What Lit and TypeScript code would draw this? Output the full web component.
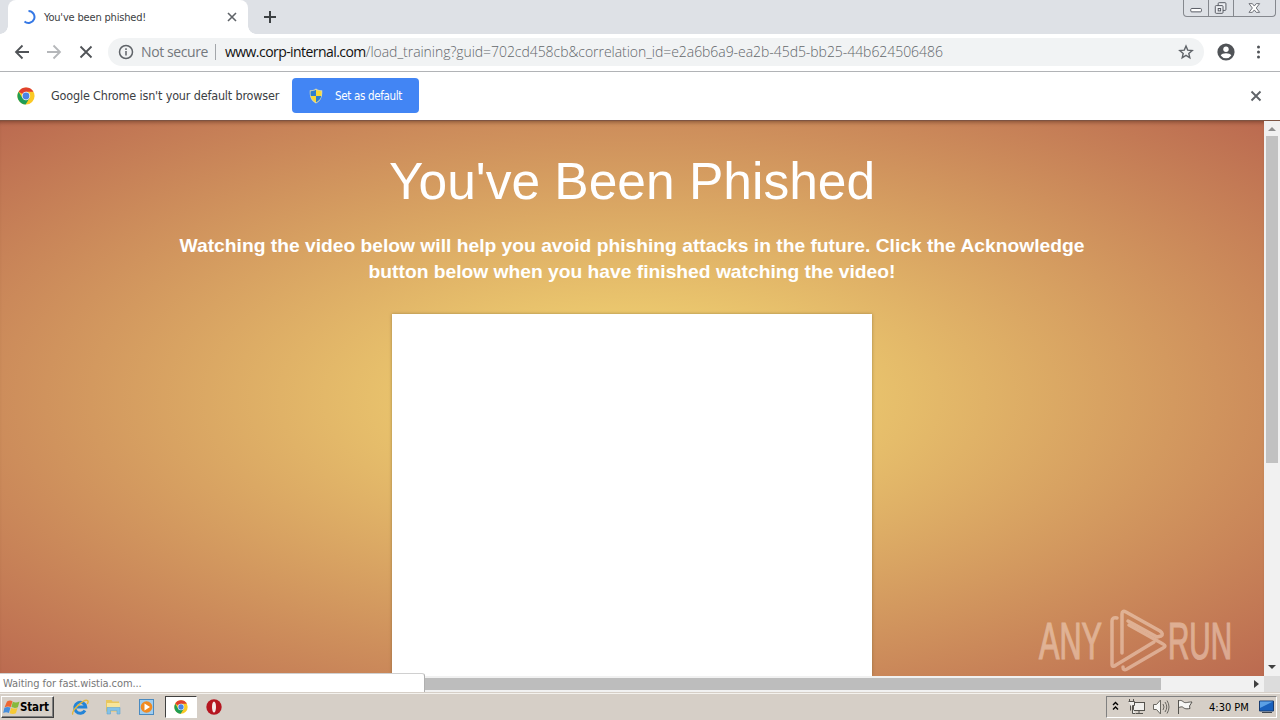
import { LitElement, css, html, svg } from 'lit'
import { customElement, property } from 'lit/decorators.js'

const chromeLogo = svg`
  <circle cx="9" cy="9" r="8.6" fill="#fbc925"/>
  <path d="M9 9 1.6 4.7A8.6 8.6 0 0 1 16.5 4.8H9Z" fill="#e0402f"/>
  <path d="M1.6 4.7A8.6 8.6 0 0 0 8.6 17.6L12.6 11.1 9 9 5.4 11.1Z" fill="#1f9d55"/>
  <circle cx="9" cy="9" r="4.2" fill="#f4f6fa"/>
  <circle cx="9" cy="9" r="3.4" fill="#4a84e4"/>
`

@customElement('browser-tabs')
export class BrowserTabs extends LitElement {

  static styles = css`
    :host {
      display: flex;
      height: 34px;
      background: #dee1e6;
      font: 11px 'DejaVu Sans Condensed', 'DejaVu Sans', sans-serif;
      color: #3c4043;
    }

    .tab {
      box-sizing: border-box;
      position: relative;
      display: flex;
      align-items: center;
      width: 240px;
      margin-left: 8px;
      padding: 0 10px 0 12px;
      background: #fff;
      border-radius: 8px 8px 0 0;
    }

    .tab::before,
    .tab::after {
      content: '';
      position: absolute;
      bottom: 0;
      width: 8px;
      height: 8px;
    }

    .tab::before {
      left: -8px;
      background: radial-gradient(circle at 0 0, #dee1e6 7.5px, #fff 8px);
    }

    .tab::after {
      right: -8px;
      background: radial-gradient(circle at 100% 0, #dee1e6 7.5px, #fff 8px);
    }

    .title {
      flex: 1;
      margin-left: 8px;
      letter-spacing: -0.18px;
      white-space: nowrap;
    }

    .add {
      margin: 10px 0 0 15px;
    }

    .window {
      display: flex;
      box-sizing: border-box;
      width: 93px;
      height: 17px;
      margin-left: auto;
      margin-right: 4px;
      border: 1px solid #85888e;
      border-top: 0;
      border-radius: 0 0 4px 4px;
    }

    .window svg {
      box-sizing: border-box;
      height: 16px;
      flex: 25;
      min-width: 0;
      border-right: 1px solid #85888e;
    }

    .window svg:last-child {
      flex: 42;
      border: 0;
    }
  `;

  render() {
    return html`
      <div class="tab">
        <svg width="16" height="16" fill="none" stroke="#3578e5" stroke-width="2">
          <path d="M8.5 2a6 6 0 1 1-4 10.5"/>
        </svg>
        <span class="title">You've been phished!</span>
        <svg width="12" height="12" stroke="#5f6368" stroke-width="1.6">
          <path d="m2 2 8 8M10 2 2 10"/>
        </svg>
      </div>
      <svg class="add" width="14" height="14" stroke="#3c4043" stroke-width="2">
        <path d="M7 1v12M1 7h12"/>
      </svg>
      <div class="window">
        <svg viewBox="0 0 25 16" fill="#fff" stroke="#555860">
          <rect x="7" y="8.5" width="11" height="3.5" rx="1"/>
        </svg>
        <svg viewBox="0 0 25 16" fill="#eceef2" stroke="#555860">
          <rect x="9.5" y="2.5" width="8" height="8" rx="1"/>
          <rect x="6.5" y="5.5" width="8" height="8" rx="1"/>
          <rect x="9.5" y="8.5" width="2.5" height="2.5"/>
        </svg>
        <svg viewBox="0 0 42 16" fill="#fff" stroke="#6c6f76">
          <path d="M15.5 3.5h3.5l2 2.5 2-2.5h3.5l-3.5 4.5 3.5 4.5H23l-2-2.5-2 2.5h-3.5L19 8Z"/>
        </svg>
      </div>
    `
  }
}

@customElement('browser-toolbar')
export class BrowserToolbar extends LitElement {

  static styles = css`
    :host {
      box-sizing: border-box;
      display: flex;
      align-items: center;
      height: 38px;
      padding: 0 12px 1px 12px;
      background: #fff;
      border-bottom: 1px solid #b1b3b6;
      font: 14px 'Open Sans', sans-serif;
      color: #74787d;
    }

    .nav {
      width: 20px;
      height: 20px;
      margin-right: 12px;
      fill: none;
      stroke: #505357;
      stroke-width: 1.8;
    }

    .nav.disabled {
      stroke: #b5b7ba;
    }

    .omnibox {
      box-sizing: border-box;
      display: flex;
      align-items: center;
      width: 1096px;
      height: 28px;
      padding: 0 10px;
      border-radius: 14px;
      background: #f1f3f4;
      white-space: nowrap;
    }

    .security,
    .url {
      margin-bottom: 2px;
    }

    .security {
      width: 67px;
      margin-left: 7px;
      letter-spacing: -0.4px;
    }

    .divider {
      width: 1px;
      height: 16px;
      margin: 0 9px 0 7px;
      background: #a3a6aa;
    }

    .url {
      flex: 1;
      color: #63676b;
      font-weight: 300;
      letter-spacing: -0.05px;
    }

    .host {
      color: #111;
      font-weight: 400;
      letter-spacing: -0.56px;
    }

    .account {
      margin-left: 12px;
    }

    .menu {
      margin-left: 16px;
    }
  `;

  render() {
    return html`
      <svg class="nav" viewBox="0 0 20 20"><path d="M17 10H4M10.5 3.5 4 10l6.5 6.5"/></svg>
      <svg class="nav disabled" viewBox="0 0 20 20"><path d="M3 10h13M9.5 3.5 16 10l-6.5 6.5"/></svg>
      <svg class="nav" viewBox="0 0 20 20"><path d="m4.5 4.5 11 11M15.5 4.5l-11 11"/></svg>
      <div class="omnibox">
        <svg width="16" height="16" fill="none" stroke="#5f6368" stroke-width="1.5">
          <circle cx="8" cy="8" r="6.5"/>
          <path d="M8 7v4.5M8 4.3v1.6"/>
        </svg>
        <span class="security">Not secure</span>
        <span class="divider"></span>
        <span class="url"><span class="host">www.corp-internal.com</span>/load_training?guid=702cd458cb&amp;correlation_id=e2a6b6a9-ea2b-45d5-bb25-44b624506486</span>
        <svg width="16" height="16" fill="none" stroke="#5f6368" stroke-width="1.4">
          <path d="m8 2 1.7 4.1 4.5.4-3.4 2.9 1 4.4L8 11.4l-3.8 2.4 1-4.4L1.8 6.5l4.5-.4Z"/>
        </svg>
      </div>
      <svg class="account" width="20" height="20">
        <circle cx="10" cy="10" r="8.6" fill="#505357"/>
        <circle cx="10" cy="7.2" r="2.7" fill="#fff"/>
        <path d="M4.7 13.5c1.2-3 9.4-3 10.6 0a6.5 6.5 0 0 1-10.6 0Z" fill="#fff"/>
      </svg>
      <svg class="menu" width="14" height="16" fill="#505357">
        <circle cx="6.5" cy="3" r="1.5"/>
        <circle cx="6.5" cy="8" r="1.5"/>
        <circle cx="6.5" cy="13" r="1.5"/>
      </svg>
    `
  }
}

@customElement('browser-infobar')
export class BrowserInfobar extends LitElement {

  static styles = css`
    :host {
      box-sizing: border-box;
      display: flex;
      align-items: center;
      height: 48px;
      padding: 0 18px 0 17px;
      background: #fff;
      font: 12.5px 'DejaVu Sans Condensed', 'DejaVu Sans', sans-serif;
      color: #3c4043;
    }

    .message {
      width: 241px;
      margin: 0 0 2px 16px;
      letter-spacing: -0.17px;
      white-space: nowrap;
    }

    .action {
      box-sizing: border-box;
      display: flex;
      align-items: center;
      width: 127px;
      height: 35px;
      margin-bottom: 1px;
      padding: 0 0 0 16px;
      border: 0;
      border-radius: 4px;
      background: #4285f4;
      color: #fff;
      font: 11.5px 'DejaVu Sans Condensed', 'DejaVu Sans', sans-serif;
      letter-spacing: -0.33px;
      white-space: nowrap;
    }

    .action svg {
      margin-right: 11px;
    }

    .close {
      margin-left: auto;
    }
  `;

  render() {
    return html`
      <svg width="18" height="18">${chromeLogo}</svg>
      <span class="message">Google Chrome isn't your default browser</span>
      <button class="action">
        <svg width="16" height="16">
          <path d="M8 .5C6 2 4 2.3 1.8 2.3 1.4 8 2.5 12.5 8 15.5 13.5 12.5 14.6 8 14.2 2.3 12 2.3 10 2 8 .5Z" fill="#d9d9b0"/>
          <path d="M8 1.8V8H2.8C2.5 6 2.5 4.7 2.7 3.2 4.7 3.2 6.2 2.9 8 1.8Z" fill="#2f7fd0"/>
          <path d="M8 1.8V8h5.2c.3-2 .3-3.3.1-4.8C11.3 3.2 9.8 2.9 8 1.8Z" fill="#f8d938"/>
          <path d="M8 8v6.5C4.8 12.7 3.3 10.7 2.8 8Z" fill="#f8d938"/>
          <path d="M8 8v6.5c3.2-1.8 4.7-3.8 5.2-6.5Z" fill="#2f7fd0"/>
        </svg>
        Set as default
      </button>
      <svg class="close" width="12" height="12" stroke="#5f6368" stroke-width="1.9">
        <path d="m1.5 1.5 9 9M10.5 1.5l-9 9"/>
      </svg>
    `
  }
}

@customElement('training-page')
export class TrainingPage extends LitElement {

  static styles = css`
    :host {
      position: relative;
      display: flex;
      flex-direction: column;
      align-items: center;
      overflow: hidden;
      background: radial-gradient(#f8e176, #bb6a50);
      box-shadow: inset 0 4px 4px -3px rgba(70, 35, 20, 0.55);
      color: #fff;
      font-family: 'Liberation Sans', Arial, sans-serif;
      text-align: center;
    }

    h1 {
      margin: 31px 0 0;
      font-size: 51.5px;
      font-weight: 400;
      line-height: 58px;
      white-space: nowrap;
    }

    p {
      width: 930px;
      margin: 23px 0 0;
      font-size: 19.24px;
      font-weight: 700;
      line-height: 26px;
    }

    .video {
      flex: 1;
      width: 480px;
      margin-top: 29px;
      background: #fff;
      box-shadow: 0 0 3px rgba(110, 90, 40, 0.55);
    }

    .watermark {
      position: absolute;
      right: 25px;
      bottom: 2px;
      overflow: visible;
      font: 51px 'Liberation Sans', sans-serif;
    }
  `;

  render() {
    return html`
      <h1>You've Been Phished</h1>
      <p>Watching the video below will help you avoid phishing attacks in the future. Click the Acknowledge button below when you have finished watching the video!</p>
      <div class="video"></div>
      <svg class="watermark" width="202" height="66" opacity="0.5" fill="#f8e0d0" stroke="#f8e0d0">
        <text transform="translate(2 51) scale(.6 1)" stroke-width="1.2">ANY</text>
        <text transform="translate(131 51) scale(.58 1)" stroke-width="1.2">RUN</text>
        <g fill="none" stroke-width="3.5" stroke-linejoin="round" stroke-linecap="round">
          <path d="M80 10q-5-1-5 3v43q0 4 4 1l38-23"/>
          <path d="M85 45V6q0-4 4-2l34 19q4 3 1 5l-4 1-29-16"/>
          <path d="M92 17l34 19q4 2 0 4L90 61q-4 2-4-2"/>
        </g>
      </svg>
    `
  }
}

@customElement('scroll-bar')
export class ScrollBar extends LitElement {

  @property({ type: Boolean, reflect: true })
  horizontal = false;

  static styles = css`
    :host {
      box-sizing: border-box;
      display: flex;
      flex-direction: column;
      align-items: center;
      background: #f1f1f1;
    }

    :host([horizontal]) {
      flex-direction: row;
      padding-left: 424px;
    }

    svg {
      display: block;
      flex: none;
    }

    .thumb {
      width: 12px;
      height: 327px;
      background: #c1c1c1;
    }

    :host([horizontal]) .thumb {
      width: 737px;
      height: 12px;
      background: #bdbdbd;
    }

    .end {
      margin-top: auto;
    }

    :host([horizontal]) .end {
      margin: 0 0 0 auto;
    }
  `;

  render() {
    return this.horizontal
      ? html`
        <div class="thumb"></div>
        <svg class="end" width="16" height="16"><path d="m6 4 5 4-5 4Z" fill="#404040"/></svg>
      `
      : html`
        <svg width="16" height="15"><path d="m4 10 4-4 4 4Z" fill="#8f8f8f"/></svg>
        <div class="thumb"></div>
        <svg class="end" width="16" height="17"><path d="m4 6 4 4 4-4Z" fill="#404040"/></svg>
      `
  }
}

@customElement('task-bar')
export class TaskBar extends LitElement {

  static styles = css`
    :host {
      box-sizing: border-box;
      display: flex;
      align-items: center;
      height: 27px;
      padding: 0 3px 0 1px;
      background: #d6cfc7;
      border-top: 1px solid #f4f2ee;
      font: 11px 'DejaVu Sans Condensed', 'DejaVu Sans', sans-serif;
      color: #000;
    }

    .start {
      box-sizing: border-box;
      display: flex;
      align-items: center;
      width: 53px;
      height: 22px;
      padding: 0 0 0 1px;
      background: #d6cfc7;
      border: 1px solid;
      border-color: #fff #404040 #404040 #fff;
      box-shadow: inset -1px -1px #808080;
      color: #000;
      font: bold 11.5px 'DejaVu Sans Condensed', 'DejaVu Sans', sans-serif;
      letter-spacing: -0.15px;
    }

    .pins {
      display: flex;
      align-items: center;
      margin-left: 17px;
    }

    .pin {
      width: 18px;
      height: 18px;
      margin-right: 15px;
    }

    .active {
      box-sizing: border-box;
      display: flex;
      justify-content: center;
      align-items: center;
      width: 32px;
      height: 22px;
      margin: 0 8px 0 -5px;
      background: #fff;
      border: 1px solid;
      border-color: #404040 #fff #fff #404040;
    }

    .active svg {
      width: 14px;
      height: 14px;
    }

    .tray {
      box-sizing: border-box;
      display: flex;
      align-items: center;
      width: 171px;
      height: 22px;
      margin-left: auto;
      border: 1px solid;
      border-color: #808080 #fff #fff #808080;
    }

    .tray svg {
      flex: none;
    }

    .clock {
      flex: 1;
      margin-left: 15px;
      white-space: nowrap;
    }
  `;

  render() {
    return html`
      <button class="start">
        <svg width="17" height="17">
          <path d="M4 2.5q3-2 5.5-.3L7.8 8Q5 6.8 1.6 8.2Z" fill="#ee6732"/>
          <path d="M9.8 2.7q3 1.5 6.7-.2l-1.6 5.7q-3 1.5-6.5-.1Z" fill="#86b93c"/>
          <path d="M1.4 8.7q3-1.4 6.1-.2L5.9 14q-2.7-1.5-5.7 0Z" fill="#468edc"/>
          <path d="M8.2 8.7q3 1.6 6.3.2l-1.6 5.4q-3 1.5-6.3-.1Z" fill="#f6c934"/>
        </svg>
        Start
      </button>
      <div class="pins">
        <svg class="pin" viewBox="0 0 18 18" fill="none">
          <path d="M14 12.500a5.500 5.500 0 1 1 .7-3.500H5.500" stroke="#2384d7" stroke-width="3"/>
          <path d="M2 16.500c-3-3 11-16 14.500-14 1.300 1-.2 3.500-.2 3.500" stroke="#e5b73b" stroke-width="1.400"/>
        </svg>
        <svg class="pin" viewBox="0 0 18 18">
          <path d="M2 4V2h5.500L8.500 3.500H15v10H2Z" fill="#e9c75e"/>
          <path d="M3 5h13v8H3Z" fill="#f8e59a"/>
          <path d="M3 9.500h13v6.500h-3v-3.500H6.500V16H3Z" fill="#83c2e8" stroke="#65a5ce" stroke-width=".6"/>
        </svg>
        <svg class="pin" viewBox="0 0 18 18">
          <rect x="2.5" y="1.5" width="14" height="15" fill="#9fcdf0" stroke="#4a8ac0"/>
          <circle cx="9.5" cy="9" r="5.8" fill="#f08a22"/>
          <path d="m7.5 5.5 5.500 3.500-5.500 3.500Z" fill="#fff"/>
        </svg>
        <div class="active"><svg viewBox="0 0 18 18">${chromeLogo}</svg></div>
        <svg class="pin" viewBox="0 0 18 18">
          <circle cx="9" cy="9" r="7.7" fill="#b51620"/>
          <ellipse cx="9" cy="9" rx="2" ry="5.5" fill="#f5eaea"/>
        </svg>
      </div>
      <div class="tray">
        <svg width="17" height="18" fill="none" stroke="#000" stroke-width="1.4">
          <path d="m6 7 2.5-2.5L11 7M6 11.500 8.500 9l2.500 2.500"/>
        </svg>
        <svg width="24" height="20" fill="#f0efec" stroke="#55534e">
          <rect x="9.5" y="5.5" width="11" height="8"/>
          <path d="M12 16.500h7M15 14v2M5.500 2v3M9.500 2v3M4.500 4.500h6v4h-2v8h3M6.500 8.500v5"/>
        </svg>
        <svg width="24" height="20" fill="#f7f7f5" stroke="#686660">
          <path d="M5.500 7.500h3l4-4.500v14l-4-4.500h-3Z"/>
          <path d="M15 7q2 3 0 6M17 5q3.500 5 0 10M19 3.500q4 6.500 0 13" fill="none"/>
        </svg>
        <svg width="22" height="20" fill="#f7f7f5" stroke="#55534e">
          <path d="M6.500 3v14M6.500 4c3-1.500 4 .5 6 1.500 2 .5 3-.5 7.500-.5l-2.500 4 .5 2.500c-5 1-6-.5-7.500-1.500-1.500-.5-3 .5-4 .5Z"/>
        </svg>
        <span class="clock">4:30 PM</span>
        <svg width="18" height="16">
          <path d="M1.500 2h14v10h-14Z" fill="#1961bd" stroke="#183c70"/>
          <path d="M2 2.500h13L2 9Z" fill="#5ba0e5"/>
          <path d="M4 13.500h10" stroke="#40464e"/>
        </svg>
      </div>
    `
  }
}

@customElement('app-root')
export class AppRoot extends LitElement {

  static styles = css`
    :host {
      position: relative;
      display: flex;
      flex-direction: column;
      width: 1280px;
      height: 720px;
      overflow: hidden;
      background: #d6cfc7;
    }

    .viewport {
      flex: 1;
      display: grid;
      grid-template-columns: 1fr 16px;
      grid-template-rows: 1fr 16px;
      min-height: 0;
      margin-bottom: 1px;
      background: #dcdcdc;
      border-top: 1px solid #7d5443;
    }

    .status {
      box-sizing: border-box;
      position: absolute;
      left: 0;
      bottom: 28px;
      width: 425px;
      height: 19px;
      padding-left: 3px;
      background: #fff;
      border-top: 1px solid #d0d0d0;
      border-right: 1px solid #b0b0b0;
      border-top-right-radius: 3px;
      font: 11px/19px 'DejaVu Sans Condensed', 'DejaVu Sans', sans-serif;
      letter-spacing: -0.08px;
      color: #777;
    }
  `;

  render() {
    return html`
      <browser-tabs></browser-tabs>
      <browser-toolbar></browser-toolbar>
      <browser-infobar></browser-infobar>
      <div class="viewport">
        <training-page></training-page>
        <scroll-bar></scroll-bar>
        <scroll-bar horizontal></scroll-bar>
      </div>
      <task-bar></task-bar>
      <div class="status">Waiting for fast.wistia.com...</div>
    `
  }
}

declare global {
  interface HTMLElementTagNameMap {
    'app-root': AppRoot
  }
}
